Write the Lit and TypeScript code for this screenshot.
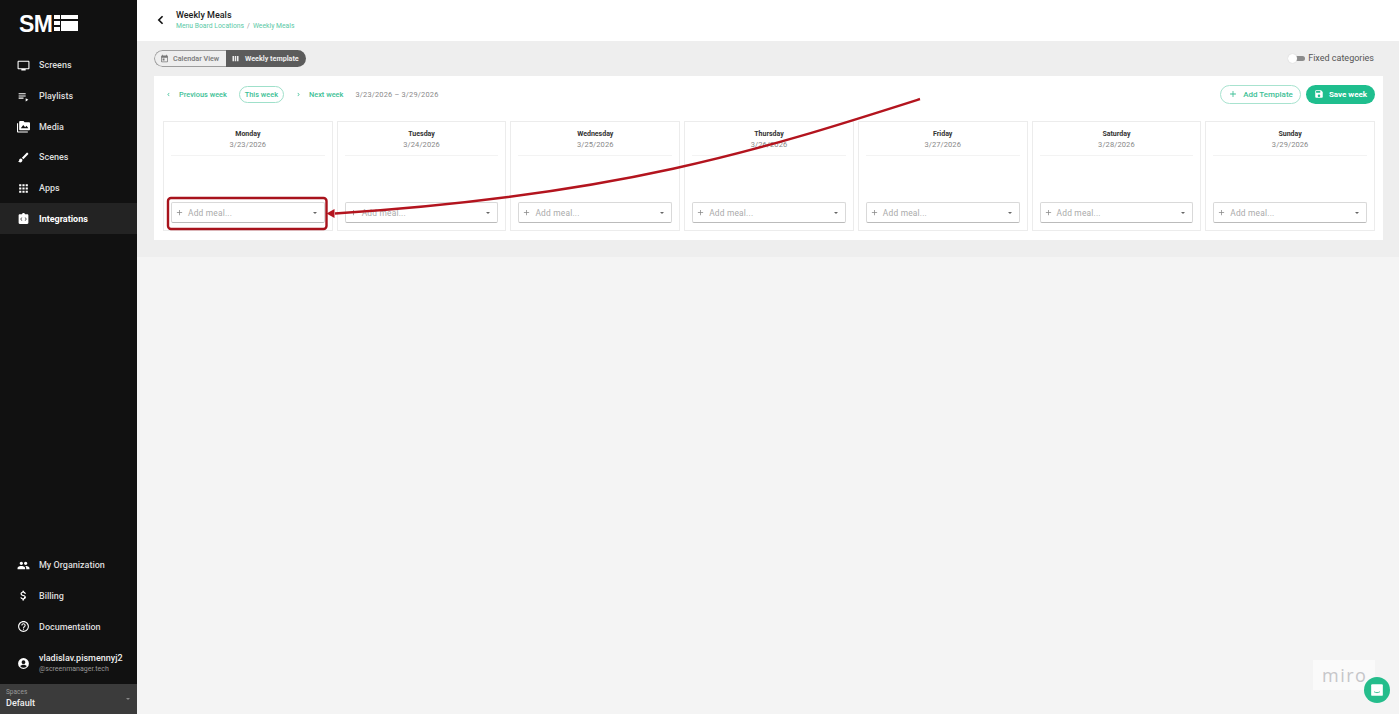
import { LitElement, html, css, svg } from "lit";
import { customElement } from "lit/decorators.js";

const ic = (d: unknown) => html`<svg class="ic" viewBox="0 0 24 24" fill="currentColor">${d}</svg>`;
const top = [
  ["Screens", svg`<path d="M21 3H3c-1.1 0-2 .9-2 2v12c0 1.1.9 2 2 2h5v2h8v-2h5c1.1 0 2-.9 2-2V5c0-1.1-.9-2-2-2zm0 14H3V5h18v12z"/>`],
  ["Playlists", svg`<path d="M3 6h13v2H3zM3 10h13v2H3zM3 14h9v2H3zM16 15v6l5-3z"/>`],
  ["Media", svg`<path d="M2 6H0v15c0 1.1.9 2 2 2h18v-2H2V6zm20-2h-8l-2-2H6c-1.1 0-2 .9-2 2v13c0 1.1.9 2 2 2h16c1.1 0 2-.9 2-2V6c0-1.1-.9-2-2-2zM7 15l4.500-6 3.500 4.500 2.500-3L21 15H7z"/>`],
  ["Scenes", svg`<path d="M7 14c-1.660 0-3 1.340-3 3 0 1.310-1.160 2-2 2 .92 1.220 2.490 2 4 2 2.210 0 4-1.790 4-4 0-1.660-1.340-3-3-3zm13.710-9.370-1.340-1.340a1 1 0 0 0-1.410 0L9 12.250 11.750 15l8.960-8.960a1 1 0 0 0 0-1.410z"/>`],
  ["Apps", svg`<path d="M4 8h4V4H4zM10 8h4V4h-4zM16 4v4h4V4zM4 14h4v-4H4zM10 14h4v-4h-4zM16 14h4v-4h-4zM4 20h4v-4H4zM10 20h4v-4h-4zM16 20h4v-4h-4z"/>`],
  ["Integrations", svg`<path fill-rule="evenodd" d="M19 4h-4.180C14.400 2.840 13.300 2 12 2s-2.400.84-2.820 2H5c-1.100 0-2 .9-2 2v14c0 1.100.9 2 2 2h14c1.100 0 2-.9 2-2V6c0-1.100-.9-2-2-2zm-9 12-1.400 0L6 13l2.600-3H10l-2.500 3zm5.400 0H14l2.500-3L14 10h1.400l2.600 3z"/>`],
];
const bottom = [
  ["My Organization", svg`<path d="M16 11c1.660 0 2.990-1.340 2.990-3S17.660 5 16 5s-3 1.340-3 3 1.340 3 3 3zm-8 0c1.660 0 2.990-1.340 2.990-3S9.660 5 8 5 5 6.340 5 8s1.340 3 3 3zm0 2c-2.330 0-7 1.170-7 3.500V19h14v-2.500C15 14.170 10.330 13 8 13zm8 0c-.29 0-.62.02-.97.05 1.160.84 1.970 1.970 1.970 3.450V19h6v-2.500c0-2.330-4.670-3.500-7-3.500z"/>`],
  ["Billing", svg`<path d="M11.800 10.900c-2.270-.59-3-1.200-3-2.150 0-1.090 1.010-1.850 2.700-1.850 1.780 0 2.440.85 2.500 2.100h2.210c-.07-1.720-1.120-3.300-3.210-3.810V3h-3v2.160c-1.940.42-3.500 1.680-3.500 3.610 0 2.310 1.910 3.460 4.700 4.130 2.500.6 3 1.480 3 2.410 0 .69-.49 1.790-2.700 1.790-2.060 0-2.870-.92-2.980-2.100h-2.200c.12 2.190 1.760 3.420 3.680 3.830V21h3v-2.150c1.950-.37 3.500-1.500 3.500-3.550 0-2.840-2.430-3.810-4.700-4.400z"/>`],
  ["Documentation", svg`<path d="M11 18h2v-2h-2v2zm1-16C6.480 2 2 6.480 2 12s4.480 10 10 10 10-4.480 10-10S17.520 2 12 2zm0 18c-4.410 0-8-3.590-8-8s3.590-8 8-8 8 3.590 8 8-3.590 8-8 8zm0-14c-2.210 0-4 1.790-4 4h2c0-1.100.9-2 2-2s2 .9 2 2c0 2-3 1.750-3 5h2c0-2.250 3-2.500 3-5 0-2.210-1.790-4-4-4z"/>`],
];
const days = [
  ["Monday", "3/23/2026"], ["Tuesday", "3/24/2026"], ["Wednesday", "3/25/2026"], ["Thursday", "3/26/2026"],
  ["Friday", "3/27/2026"], ["Saturday", "3/28/2026"], ["Sunday", "3/29/2026"],
];

@customElement("app-root")
export class AppRoot extends LitElement {
  static styles = css`
    :host { display: block; width: 1399px; height: 714px; position: relative; overflow: hidden;
      font-family: Roboto, "Liberation Sans", sans-serif; background: #f4f4f4; color: #222; }
    .app { display: flex; height: 714px; }
    .side { width: 137px; flex: none; background: #111; color: #eee; display: flex; flex-direction: column; }
    .logo { height: 50px; padding: 15px 0 0 19px; box-sizing: border-box; display: flex; align-items: flex-start; gap: 2px; }
    .logo b { font: 900 23px/19px "Liberation Sans", sans-serif; color: #fff; letter-spacing: -.6px; }
    .nav { display: flex; flex-direction: column; }
    .item { height: 30.7px; display: flex; align-items: center; gap: 8px; padding-left: 18px; font-size: 9px; font-weight: 500; color: #ddd; }
    .item.on { background: #232323; color: #fff; font-weight: 700; }
    .ic { width: 13px; height: 13px; flex: none; color: inherit; }
    .item .ic { width: 13px; height: 13px; color: #fff; margin-left: -1px; margin-right: 1px; }
    .grow { flex: 1; }
    .user { height: 42px; display: flex; align-items: center; gap: 8px; padding-left: 18px; }
    .user .ic { color: #fff; width: 13px; height: 13px; margin-left: -1px; margin-right: 1px; }
    .uname { font-size: 9px; font-weight: 500; color: #eee; line-height: 12px; }
    .umail { font-size: 7px; color: #999; line-height: 11px; }
    .space { height: 30px; background: #3b3b3b; padding: 4px 6px 0; box-sizing: border-box; position: relative; }
    .space small { display: block; font-size: 6.500px; line-height: 9px; color: #999; }
    .space span { display: block; font-size: 9px; font-weight: 500; color: #eee; line-height: 12px; }
    .space i { position: absolute; right: 7px; top: 14px; border: 2px solid transparent; border-top-color: #888; }

    .main { flex: 1; display: flex; flex-direction: column; min-width: 0; }
    .head { height: 41px; background: #fff; display: flex; align-items: center; gap: 11px; padding-left: 19px; box-sizing: border-box; flex: none; }
    .head .back { width: 9px; height: 10px; margin-top: -1px; color: #111; }
    .title { font-size: 9px; font-weight: 500; line-height: 12px; color: #1c1c1c; }
    .crumb { font-size: 6.800px; line-height: 11px; color: #5bc9a6; }
    .crumb em { font-style: normal; color: #999; margin: 0 3px; }
    .band { height: 216px; background: #eeeeee; padding: 9px 16px 0 17px; box-sizing: border-box; flex: none; }
    .bar { height: 17px; display: flex; justify-content: space-between; align-items: center; margin-bottom: 9px; }
    .seg { display: flex; height: 17px; border-radius: 9px; overflow: hidden; font-size: 7.200px; font-weight: 500; }
    .seg div { display: flex; align-items: center; box-sizing: border-box; height: 17px; }
    .seg .a { width: 72px; padding-left: 5px; gap: 4px; border: 1px solid #9d9d9d; border-right: 0; border-radius: 9px 0 0 9px; color: #777; }
    .seg .b { width: 80px; padding-left: 5px; gap: 5px; background: #5c5c5c; color: #eee; font-weight: 700; }
    .seg .ic { width: 9px; height: 9px; }
    .fixed { display: flex; align-items: center; gap: 3px; font-size: 9px; color: #555; padding: 0 9px 1px 0; }
    .switch { width: 17px; height: 7px; position: relative; }
    .switch::before { content: ""; position: absolute; left: 4px; right: 0; top: 1px; height: 5px; border-radius: 3px; background: #8c8c8c; }
    .switch::after { content: ""; position: absolute; left: 0; top: -1px; width: 9px; height: 9px; border-radius: 50%; background: #fff; box-shadow: 0 0 1px #bbb; }
    .panel { background: #fff; height: 164px; padding: 9px 8px 0 9px; box-sizing: border-box; }
    .tools { height: 18px; display: flex; align-items: center; margin-bottom: 18px; font-size: 7.400px; font-weight: 500; color: #3dbf96; }
    .tools .ic { width: 7px; height: 7px; }
    .pv { display: flex; align-items: center; margin-left: 2px; gap: 7px; }
    .tw { margin-left: 12px; width: 45px; height: 17px; border: 1px solid #9fe0ca; border-radius: 9px; box-sizing: border-box; display: flex; align-items: center; justify-content: center; }
    .nx { display: flex; align-items: center; margin-left: 11px; gap: 7px; }
    .range { margin-left: 12px; color: #8a8a8a; font-weight: 400; font-size: 7.400px; letter-spacing: .2px; }
    .spacer { flex: 1; }
    .add { width: 81px; height: 19px; border: 1px solid #a8e3cf; border-radius: 10px; box-sizing: border-box; display: flex; align-items: center; justify-content: center; gap: 5px; font-size: 8px; margin-right: 5px; }
    .add .ic { width: 10px; height: 10px; }
    .save { width: 69px; height: 19px; background: #1fbe8e; color: #fff; border-radius: 10px; display: flex; align-items: center; justify-content: center; gap: 5px; font-size: 8px; font-weight: 700; }
    .save .ic { width: 10px; height: 10px; }
    .days { display: grid; grid-template-columns: repeat(7, 1fr); gap: 4px; height: 110px; }
    .day { border: 1px solid #ececec; box-sizing: border-box; padding: 7px 7px 0; display: flex; flex-direction: column; align-items: stretch; text-align: center; }
    .dn { font-size: 7px; font-weight: 700; line-height: 10px; color: #333; }
    .dd { font-size: 7.500px; line-height: 11px; color: #888; padding-bottom: 5px; border-bottom: 1px solid #f3f3f3; letter-spacing: .1px; }
    .sel { margin-top: auto; margin-bottom: 7px; height: 21px; border: 1px solid #d9d9d9; border-bottom-color: #bbb; border-radius: 2px; display: flex; align-items: center; box-sizing: border-box; padding: 0 7px 0 3px; font-size: 8.400px; color: #aaa; gap: 4px; letter-spacing: .2px; }
    .sel .ic { width: 9px; height: 9px; color: #888; }
    .sel span { flex: 1; text-align: left; }
    .sel i { border: 2.500px solid transparent; border-top-color: #666; border-bottom: 0; }

    .overlay { position: absolute; inset: 0; width: 1399px; height: 714px; pointer-events: none; }
    .miro { position: absolute; left: 1313px; top: 660px; width: 62px; height: 30px; background: rgba(255,255,255,.5); color: #c6c6c9; font: 500 18px/30px "Open Sans", sans-serif; letter-spacing: 1.500px; padding-left: 9px; box-sizing: border-box; }
    .chat { position: absolute; left: 1364px; top: 677px; width: 26px; height: 26px; border-radius: 50%; background: #25bd8c; display: flex; align-items: center; justify-content: center; }
    .chat svg { width: 14px; height: 14px; }
  `;

  render() {
    return html`
      <div class="app">
        <aside class="side">
          <div class="logo"><b>SM</b>
            <svg width="24" height="16" viewBox="0 0 24 16" fill="#fff"><path d="M0 0h6v4H0zM0 6h6v4H0zM0 12h6v4H0zM7 0h17v4H7zM7 6h17v10H7z"/></svg>
          </div>
          <nav class="nav">
            ${top.map(([n, d]) => html`<div class="item ${n === "Integrations" ? "on" : ""}">${ic(d)}<span>${n}</span></div>`)}
          </nav>
          <div class="grow"></div>
          <nav class="nav">
            ${bottom.map(([n, d]) => html`<div class="item">${ic(d)}<span>${n}</span></div>`)}
          </nav>
          <div class="user">
            ${ic(svg`<path fill-rule="evenodd" d="M12 2a10 10 0 1 0 0 20 10 10 0 0 0 0-20zm0 4a3.500 3.500 0 1 1 0 7 3.500 3.500 0 0 1 0-7zm0 14a8 8 0 0 1-6-2.800c.9-1.700 3.800-2.700 6-2.700s5.100 1 6 2.700a8 8 0 0 1-6 2.800z"/>`)}
            <div><div class="uname">vladislav.pismennyj2</div><div class="umail">@screenmanager.tech</div></div>
          </div>
          <div class="space"><small>Spaces</small><span>Default</span><i></i></div>
        </aside>
        <main class="main">
          <header class="head">
            <svg class="back" viewBox="0 0 10 12" fill="none" stroke="currentColor" stroke-width="2"><path d="M7.500 1.500 3 6l4.500 4.500"/></svg>
            <div>
              <div class="title">Weekly Meals</div>
              <div class="crumb">Menu Board Locations<em>/</em>Weekly Meals</div>
            </div>
          </header>
          <section class="band">
            <div class="bar">
              <div class="seg">
                <div class="a">${ic(svg`<path d="M19 4h-1V2h-2v2H8V2H6v2H5c-1.100 0-2 .9-2 2v14c0 1.100.9 2 2 2h14c1.100 0 2-.9 2-2V6c0-1.100-.9-2-2-2zm0 16H5V10h14v10zM7 12h5v5H7z"/>`)}Calendar View</div>
                <div class="b">${ic(svg`<path d="M4 5h4v14H4zM10 5h4v14h-4zM16 5h4v14h-4z"/>`)}Weekly template</div>
              </div>
              <div class="fixed"><div class="switch"></div>Fixed categories</div>
            </div>
            <div class="panel">
              <div class="tools">
                <div class="pv">${ic(svg`<path d="M15.400 7.400 14 6l-6 6 6 6 1.400-1.400L10.800 12z"/>`)}<span>Previous week</span></div>
                <div class="tw">This week</div>
                <div class="nx">${ic(svg`<path d="M8.600 16.600 10 18l6-6-6-6-1.400 1.400 4.600 4.600z"/>`)}<span>Next week</span></div>
                <div class="range">3/23/2026 – 3/29/2026</div>
                <div class="spacer"></div>
                <div class="add">${ic(svg`<path d="M19 13h-6v6h-2v-6H5v-2h6V5h2v6h6z"/>`)}Add Template</div>
                <div class="save">${ic(svg`<path d="M17 3H5c-1.100 0-2 .9-2 2v14c0 1.100.9 2 2 2h14c1.100 0 2-.9 2-2V7l-4-4zm-5 16c-1.660 0-3-1.340-3-3s1.340-3 3-3 3 1.340 3 3-1.340 3-3 3zm3-10H5V5h10v4z"/>`)}Save week</div>
              </div>
              <div class="days">
                ${days.map(([n, d]) => html`<div class="day">
                  <div class="dn">${n}</div><div class="dd">${d}</div>
                  <div class="sel">${ic(svg`<path d="M19 13h-6v6h-2v-6H5v-2h6V5h2v6h6z"/>`)}<span>Add meal...</span><i></i></div>
                </div>`)}
              </div>
            </div>
          </section>
        </main>
      </div>
      <svg class="overlay" viewBox="0 0 1399 714" fill="none">
        <rect x="168" y="198" width="158.500" height="31" rx="3" stroke="#a8131c" stroke-width="2.400"/>
        <path d="M920 99C760 150 620 195 335 213.500" stroke="#b3141e" stroke-width="2.400"/>
        <path d="M326.500 213.500l8-4.500v9z" fill="#b3141e"/>
      </svg>
      <div class="miro">miro</div>
      <div class="chat"><svg viewBox="0 0 24 24" fill="#fff"><path d="M4 2h16a2 2 0 0 1 2 2v16a2 2 0 0 1-2 2H4a2 2 0 0 1-2-2V4a2 2 0 0 1 2-2z"/><path d="M7 15c3 2 7 2 10 0" stroke="#25bd8c" stroke-width="1.500" fill="none"/></svg></div>
    `;
  }
}
